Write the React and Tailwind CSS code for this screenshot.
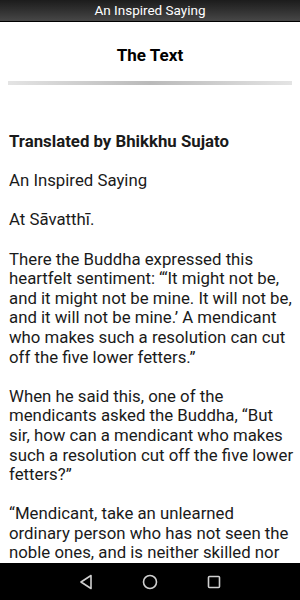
export default function App() {
    return (
        <div
            className="w-[300px] h-[600px] flex flex-col bg-white overflow-hidden"
            style={{ fontFamily: "Roboto, 'Noto Sans', sans-serif" }}
        >
            {/* Title bar */}
            <div className="h-[22px] shrink-0 flex items-center justify-center bg-gradient-to-b from-[#1c1c1c] to-[#474747] border-b border-black">
                <span className="text-white text-[13.5px] leading-none">
                    An Inspired Saying
                </span>
            </div>

            {/* Content */}
            <div className="flex-1 overflow-hidden">
                <h1 className="text-center font-bold text-[17px] text-black mt-[22px] leading-[22px]">
                    The Text
                </h1>
                <div className="mx-2 mt-[15px] h-[4px] bg-gradient-to-r from-[#e4e4e4] via-[#bababa] to-[#e4e4e4]" />

                <div className="mt-[47px] pl-[9px] pr-[5px] text-[16.8px] leading-[19.6px] text-[#1a1a1a]">
                    <p className="font-bold">Translated by Bhikkhu Sujato</p>
                    <p className="mt-[19.6px]">An Inspired Saying</p>
                    <p className="mt-[19.6px]">At Sāvatthī.</p>
                    <p className="mt-[19.6px]">
                        There the Buddha expressed this heartfelt sentiment:
                        “‘It might not be, and it might not be mine. It will
                        not be, and it will not be mine.’ A mendicant who
                        makes such a resolution can cut off the five lower
                        fetters.”
                    </p>
                    <p className="mt-[19.6px]">
                        When he said this, one of the mendicants asked the
                        Buddha, “But sir, how can a mendicant who makes such
                        a resolution cut off the five lower fetters?”
                    </p>
                    <p className="mt-[19.6px]">
                        “Mendicant, take an unlearned ordinary person who has
                        not seen the noble ones, and is neither skilled nor
                        trained in the teaching of the noble ones.
                    </p>
                </div>
            </div>

            {/* Nav bar */}
            <div className="h-[37px] shrink-0 bg-black flex items-center justify-center gap-[46px]">
                <svg width="18" height="18" viewBox="0 0 18 18" fill="none" stroke="#d0d0d0" strokeWidth="1.6" strokeLinejoin="round">
                    <path d="M14 2.5 L4 9 L14 15.5 Z" />
                </svg>
                <svg width="18" height="18" viewBox="0 0 18 18" fill="none" stroke="#d0d0d0" strokeWidth="1.6">
                    <circle cx="9" cy="9" r="6.5" />
                </svg>
                <svg width="18" height="18" viewBox="0 0 18 18" fill="none" stroke="#d0d0d0" strokeWidth="1.6">
                    <rect x="3.5" y="3.5" width="11" height="11" rx="1" />
                </svg>
            </div>
        </div>
    );
}
